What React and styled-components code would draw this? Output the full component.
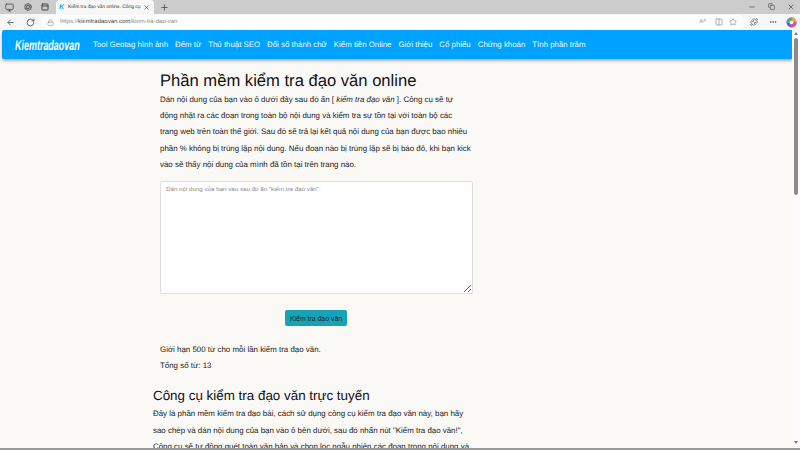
import React from 'react';
import styled, { createGlobalStyle } from 'styled-components';
import { ArrowLeft, RotateCw, Lock, Plus, X, Minus, Copy, Star, Ellipsis, Puzzle, Columns2, Monitor, Aperture, PanelTop } from 'lucide-react';

const GlobalStyle = createGlobalStyle`
  html, body {
    margin: 0;
    height: 450px;
    overflow: hidden;
    background: #faf9f6;
    font-family: "Liberation Sans", Arial, sans-serif;
    text-rendering: geometricPrecision;
  }
  * { box-sizing: border-box; }
`;

const Shell = styled.div`
  width: 800px;
  height: 450px;
  display: flex;
  flex-direction: column;
  overflow: hidden;
`;

const TabStrip = styled.div`
  height: 14px;
  background: #cccccc;
  display: flex;
  align-items: center;
  color: #444;
  flex: none;
`;

const StripIcon = styled.span`
  width: ${p => p.$w || 22}px;
  display: flex;
  justify-content: center;
`;

const Tab = styled.div`
  width: 98px;
  height: 14px;
  margin: 0 3px 0 3px;
  padding: 0 4px 0 3px;
  background: #f7f7f7;
  border-radius: 4px 4px 0 0;
  display: flex;
  align-items: center;
  gap: 4px;
  font-size: 4.9px;
  color: #333;
  white-space: nowrap;
  overflow: hidden;
`;

const TabTitle = styled.span`
  flex: 1;
  min-width: 0;
`;

const Favicon = styled.span`
  font: italic bold 7px "Liberation Sans", sans-serif;
  color: #00a2ff;
`;

const WindowButtons = styled.div`
  margin-left: auto;
  display: flex;
  gap: 12px;
  padding-right: 5px;
`;

const Toolbar = styled.div`
  height: 16px;
  background: #f7f7f7;
  display: flex;
  align-items: center;
  color: #444;
  flex: none;
`;

const NavIcon = styled.span`
  width: ${p => p.$w || 20}px;
  display: flex;
  justify-content: center;
`;

const AddressBar = styled.div`
  flex: 1;
  height: 14px;
  margin-left: 1px;
  background: #fff;
  border-radius: 7px;
  display: flex;
  align-items: center;
  padding: 0 7px 0 6px;
  gap: 6px;
  font-size: 6px;
  color: #8a8a8a;
`;

const Url = styled.span`
  flex: 1;
  b { color: #444; font-weight: 400; }
`;

const ReadAloud = styled.span`
  margin-right: 3px;
`;

const Viewport = styled.div`
  flex: 1;
  min-height: 0;
  display: flex;
  position: relative;
  background: #faf9f6;
`;

const Page = styled.div`
  flex: 1;
  min-width: 0;
  overflow: hidden;
  padding-left: 2px;
`;

const Scrollbar = styled.div`
  width: 8px;
  flex: none;
  background: #fbfbfb;
  display: flex;
  flex-direction: column;
  align-items: center;
  padding: 2px 0 6px;
  gap: 3px;
`;

const Arrow = styled.div`
  width: 0;
  height: 0;
  border-left: 2px solid transparent;
  border-right: 2px solid transparent;
  border-${p => (p.$down ? 'top' : 'bottom')}: 3px solid #777;
  margin-top: ${p => (p.$down ? 'auto' : '0')};
`;

const Thumb = styled.div`
  width: 4px;
  height: 157px;
  border-radius: 2px;
  background: #8b8b8b;
`;

const Navbar = styled.nav`
  height: 29px;
  background: #00a2ff;
  border-radius: 2px 0 0 2px;
  box-shadow: 0 2px 3px rgba(0, 0, 0, .3);
  display: flex;
  align-items: center;
  padding-left: 13px;
  color: #fff;
`;

const Brand = styled.a`
  font: italic bold 14px "Liberation Sans", sans-serif;
  width: 78px;
  flex: none;
  transform: scaleX(.64);
  transform-origin: left center;
  white-space: nowrap;
`;

const NavLink = styled.a`
  font-size: 7.85px;
  margin-right: 7px;
  white-space: nowrap;
  color: #eef9ff;
`;

const Content = styled.main`
  padding: 12px 0 0 158px;
  width: 480px;
  color: #222;
`;

const Title = styled.h1`
  margin: 0 0 1px;
  font-size: 16.6px;
  line-height: 20px;
  font-weight: 400;
  color: #111;
  white-space: nowrap;
`;

const Text = styled.p`
  margin: 0;
  font-size: 7.92px;
  line-height: 16.2px;
  white-space: nowrap;
`;

const Editor = styled.textarea`
  display: block;
  width: 313px;
  height: 113px;
  margin-top: 8px;
  padding: 3px 5px;
  background: #fff;
  border: 1px solid #dedede;
  border-radius: 2px;
  font: 6.2px "Liberation Sans", sans-serif;
  &::placeholder { color: #8a8a8a; opacity: 1; }
`;

const CheckButton = styled.button`
  display: block;
  width: 62px;
  height: 16px;
  margin: 16px 0 0 125px;
  padding: 0;
  border: 0;
  border-radius: 2px;
  background: #17a2b8;
  color: #1b2a2e;
  font: 6.9px "Liberation Sans", sans-serif;
`;

const Limits = styled.div`
  margin-top: 16px;
`;

const Article = styled.section`
  margin: 12px 0 0 -7px;
`;

const Subtitle = styled.h2`
  margin: 0;
  font-size: 13.4px;
  line-height: 20px;
  font-weight: 400;
  color: #111;
  white-space: nowrap;
`;

const BottomEdge = styled.div`
  position: absolute;
  left: 0;
  right: 0;
  bottom: 0;
  height: 2px;
  background: #9a9a9a;
`;

const links = ['Tool Geotag hình ảnh', 'Đếm từ', 'Thủ thuật SEO', 'Đổi số thành chữ', 'Kiếm tiền Online', 'Giới thiệu', 'Cổ phiếu', 'Chứng khoán', 'Tính phần trăm'];

export default function App() {
  return (
    <Shell>
      <GlobalStyle />
      <TabStrip>
        <StripIcon $w={19}><Monitor size={9} /></StripIcon>
        <StripIcon $w={17}><Aperture size={8} /></StripIcon>
        <StripIcon $w={17}><PanelTop size={8} strokeWidth={3} /></StripIcon>
        <Tab>
          <Favicon>K</Favicon>
          <TabTitle>Kiểm tra đạo văn online. Công cụ</TabTitle>
          <X size={7} />
        </Tab>
        <StripIcon $w={14}><Plus size={9} /></StripIcon>
        <WindowButtons>
          <Minus size={8} />
          <Copy size={7} />
          <X size={8} />
        </WindowButtons>
      </TabStrip>
      <Toolbar>
        <NavIcon $w={21}><ArrowLeft size={9} /></NavIcon>
        <NavIcon $w={19}><RotateCw size={9} /></NavIcon>
        <AddressBar>
          <Lock size={7} />
          <Url>https://<b>kiemtradaovan.com</b>/kiem-tra-dao-van</Url>
          <ReadAloud>Aᴬ</ReadAloud>
          <Columns2 size={8} />
          <Star size={8} />
        </AddressBar>
        <NavIcon $w={20}><Puzzle size={8} /></NavIcon>
        <NavIcon $w={18}><Ellipsis size={8} /></NavIcon>
        <NavIcon $w={18}>
          <svg width="11" height="11" viewBox="0 0 12 12">
            <circle cx="6" cy="6" r="5.5" fill="#7a5be0" />
            <path d="M6 .5A5.5 5.5 0 0 1 11.5 6H6z" fill="#f2a33a" />
            <path d="M11.5 6A5.5 5.5 0 0 1 6 11.5V6z" fill="#e5527a" />
            <path d="M.5 6A5.5 5.5 0 0 1 6 .5V6z" fill="#3fb48a" />
            <circle cx="6" cy="6" r="2" fill="#fff" />
          </svg>
        </NavIcon>
      </Toolbar>
      <Viewport>
        <Page>
          <Navbar>
            <Brand>Kiemtradaovan</Brand>
            {links.map(l => <NavLink key={l}>{l}</NavLink>)}
          </Navbar>
          <Content>
            <Title>Phần mềm kiểm tra đạo văn online</Title>
            <Text>Dán nội dung của bạn vào ô dưới đây sau đó ấn [ <em>kiểm tra đạo văn</em> ]. Công cụ sẽ tự</Text>
            <Text>động nhặt ra các đoạn trong toàn bộ nội dung và kiểm tra sự tồn tại với toàn bộ các</Text>
            <Text>trang web trên toàn thế giới. Sau đó sẽ trả lại kết quả nội dung của bạn được bao nhiêu</Text>
            <Text>phần % không bị trùng lặp nội dung. Nếu đoạn nào bị trùng lặp sẽ bị báo đỏ, khi bạn kick</Text>
            <Text>vào sẽ thấy nội dung của mình đã tồn tại trên trang nào.</Text>
            <Editor placeholder={'Dán nội dung của bạn vào sau đó ấn "kiểm tra đạo văn".'} />
            <CheckButton>Kiểm tra đạo văn</CheckButton>
            <Limits>
              <Text>Giới hạn 500 từ cho mỗi lần kiểm tra đạo văn.</Text>
              <Text>Tổng số từ: 13</Text>
            </Limits>
            <Article>
              <Subtitle>Công cụ kiểm tra đạo văn trực tuyến</Subtitle>
              <Text>Đây là phần mềm kiểm tra đạo bài, cách sử dụng công cụ kiểm tra đạo văn này, bạn hãy</Text>
              <Text>sao chép và dán nội dung của bạn vào ô bên dưới, sau đó nhấn nút  "Kiểm tra đạo văn!",</Text>
              <Text>Công cụ sẽ tự động quét toàn văn bản và chọn lọc ngẫu nhiên các đoạn trong nội dung và</Text>
            </Article>
          </Content>
        </Page>
        <Scrollbar>
          <Arrow />
          <Thumb />
          <Arrow $down />
        </Scrollbar>
        <BottomEdge />
      </Viewport>
    </Shell>
  );
}
